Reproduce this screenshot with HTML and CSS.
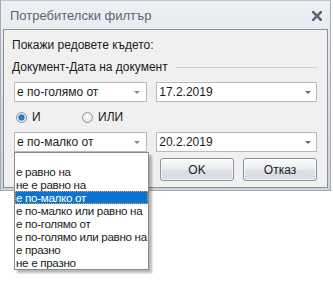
FILE: index.html
```html
<!DOCTYPE html>
<html lang="bg">
<head>
  <meta charset="UTF-8" />
  <title>Потребителски филтър</title>
  <link rel="stylesheet" href="styles.css">
</head>
<body>
  <div class="window">
    <div class="titlebar">
      <span class="title">Потребителски филтър</span>
      <svg class="close" width="10" height="10" viewBox="0 0 10 10">
        <path d="M1 1 L9 9 M9 1 L1 9" stroke="#5f6878" stroke-width="2.6" stroke-linecap="square"/>
      </svg>
    </div>

    <div class="dialog">
      <p class="prompt">Покажи редовете където:</p>

      <div class="group-head">
        <span>Документ-Дата на документ</span>
        <span class="rule"></span>
      </div>

      <div class="row">
        <div class="combo op">
          <span>е по-голямо от</span>
          <span class="arrow"></span>
        </div>
        <div class="combo date">
          <span>17.2.2019</span>
          <span class="arrow dark"></span>
        </div>
      </div>

      <div class="radios">
        <label class="radio checked"><span class="dot"></span>И</label>
        <label class="radio"><span class="dot"></span>ИЛИ</label>
      </div>

      <div class="row">
        <div class="combo op open">
          <span>е по-малко от</span>
          <span class="arrow"></span>
          <ul class="dropdown">
            <li class="blank"></li>
            <li>е равно на</li>
            <li>не е равно на</li>
            <li class="selected">е по-малко от</li>
            <li>е по-малко или равно на</li>
            <li>е по-голямо от</li>
            <li>е по-голямо или равно на</li>
            <li>е празно</li>
            <li>не е празно</li>
          </ul>
        </div>
        <div class="combo date">
          <span>20.2.2019</span>
          <span class="arrow dark"></span>
        </div>
      </div>

      <div class="buttons">
        <button type="button">OK</button>
        <button type="button">Отказ</button>
      </div>
    </div>
  </div>
</body>
</html>
```

FILE: styles.css
```css
:root {
  --text: #1b1b1b;
  --panel: #f0f0f0;
  --field-border: #b9b9b9;
  --select: #0a74d6;
}

* {
  box-sizing: border-box;
  margin: 0;
  padding: 0;
}

html,
body {
  min-height: 100%;
  height: 100%;
}

body {
  background: #fff;
  font-family: 'Liberation Sans', Arial, sans-serif;
  font-size: 12px;
  color: var(--text);
}

.window {
  position: relative;
  width: 331px;
  background: linear-gradient(#eef0f4, #d6dce5 60%, #cdd4de);
  border: 1px solid #a3acb9;
  border-top-color: #bfc6d0;
}

.titlebar {
  height: 28px;
  display: flex;
  align-items: center;
  justify-content: space-between;
  padding: 0 8px 0 9px;
}

.title {
  font-size: 13px;
  color: #5b6576;
}

.close {
  margin-top: 1px;
}

.dialog {
  margin: 0 2px 2px;
  background: var(--panel);
  border: 1px solid #8d8f93;
  padding: 8px 10px 6px 10px;
}

.prompt {
  line-height: 14px;
  margin-left: -2px;
}

.group-head {
  display: flex;
  align-items: center;
  gap: 8px;
  margin: 8px 0 8px -2px;
  line-height: 14px;
}

.rule {
  flex: 1;
  height: 1px;
  background: #d0d0d0;
}

.row {
  display: flex;
  gap: 9px;
}

.combo {
  position: relative;
  height: 20px;
  background: #fff;
  border: 1px solid var(--field-border);
  display: flex;
  align-items: center;
  justify-content: space-between;
  padding: 0 6px 0 2px;
}

.combo.op {
  width: 135px;
}

.combo.date {
  width: 163px;
  padding-right: 5px;
}

.arrow {
  width: 0;
  height: 0;
  border-left: 3px solid transparent;
  border-right: 3px solid transparent;
  border-top: 3px solid #8b8b8b;
}

.arrow.dark {
  border-left-width: 3.5px;
  border-right-width: 3.5px;
  border-top-color: #6a6a6a;
}

.radios {
  display: flex;
  height: 14px;
  margin: 8px 0 8px 2px;
  align-items: center;
}

.radio {
  display: flex;
  align-items: center;
  gap: 5px;
  width: 66px;
}

.dot {
  width: 11px;
  height: 11px;
  border-radius: 50%;
  border: 1px solid #8d9298;
  background: radial-gradient(circle at 50% 40%, #ffffff, #dcdcdc);
}

.radio.checked .dot {
  background: radial-gradient(circle, #3b8fd8 0, #1565b7 2.5px, #cfe3f5 3.5px, #ececec 5px);
}

.combo.open {
  z-index: 5;
}

.dropdown {
  position: absolute;
  left: -1px;
  top: 19px;
  width: 135px;
  list-style: none;
  background: #fff;
  border: 1px solid #8a8a8a;
  box-shadow: 3px 3px 2px rgba(0, 0, 0, 0.28);
}

.dropdown li {
  display: block;
  height: 13px;
  line-height: 13px;
  padding-left: 1px;
  white-space: nowrap;
  font-size: 11.6px;
  letter-spacing: -0.3px;
}

.dropdown li.blank {
  height: 12px;
}

.dropdown li.selected {
  background: var(--select);
  color: #fff;
  outline: 1px dotted #f2a03a;
  outline-offset: -1px;
}

.buttons {
  display: flex;
  justify-content: flex-end;
  gap: 9px;
  margin-top: 6px;
}

button {
  width: 74px;
  height: 23px;
  font-family: inherit;
  font-size: 12px;
  color: var(--text);
  border: 1px solid #8e9196;
  border-radius: 3px;
  background: linear-gradient(#fbfbfb, #eceef1 45%, #dde1e7 55%, #d6dae1);
  box-shadow: inset 0 0 0 1px rgba(255, 255, 255, 0.7);
}
```
